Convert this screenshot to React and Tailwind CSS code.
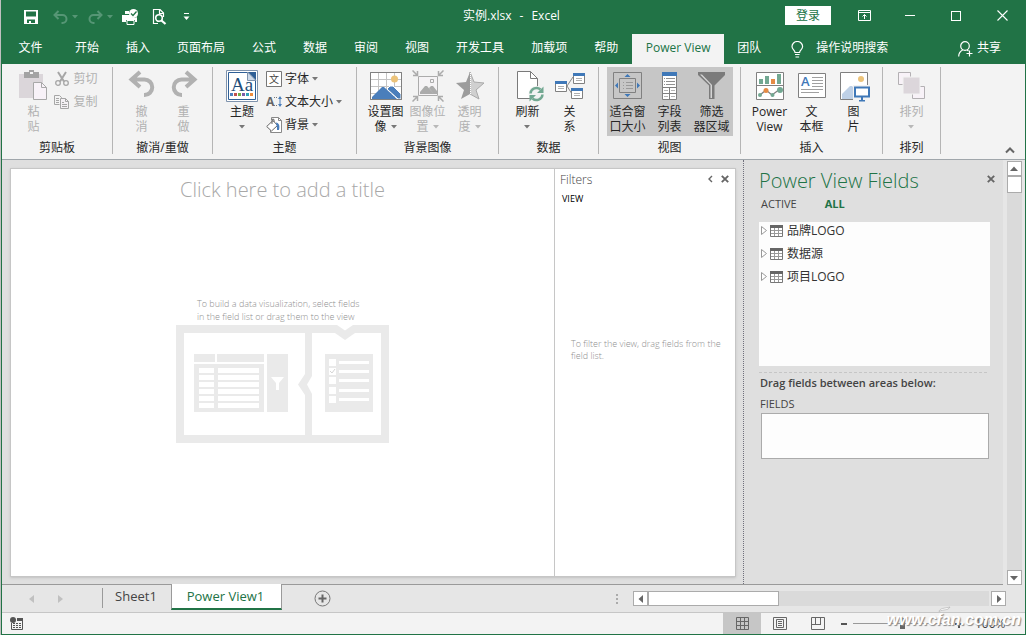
import { useState } from 'react';

const tabs = ['开始', '插入', '页面布局', '公式', '数据', '审阅', '视图', '开发工具', '加载项', '帮助', 'Power View', '团队'];
const tables = ['品牌LOGO', '数据源', '项目LOGO'];

const Caret = () => (
  <svg width="6" height="4" viewBox="0 0 6 4" className="inline-block shrink-0">
    <path d="M0 0h6L3 3.5z" fill="currentColor" />
  </svg>
);

const CloseIcon = () => (
  <svg width="8" height="8" viewBox="0 0 8 8">
    <path d="M0.8 0.8l6.4 6.4M7.2 0.8L0.8 7.2" stroke="currentColor" strokeWidth="1.9" />
  </svg>
);

/* quick access toolbar */

const SaveIcon = () => (
  <svg width="14" height="14" viewBox="0 0 14 14">
    <path fillRule="evenodd" fill="#fff" d="M0 0h14v14H0zM2 1.500v5h10v-5zM3 9.500V13h2v-2h2v2h4V9.500z" />
  </svg>
);

const SmallUndo = ({ flip }) => (
  <svg width="15" height="14" viewBox="0 0 15 14" className={flip ? '-scale-x-100' : ''}>
    <path d="M5.500 1L1.500 5l4 4M1.500 5h8a4 4 0 0 1 0 8H8.500" fill="none" stroke="#569675" strokeWidth="2" />
  </svg>
);

const QuickPrintIcon = () => (
  <svg width="17" height="16" viewBox="0 0 17 16">
    <path d="M0 6h8a4.500 4.500 0 0 0 7 2v5h-2v-2H4v2H0zM3 2h4v3H3z" fill="#fff" />
    <path d="M5 11.500h7v4H5z" fill="#217346" stroke="#fff" />
    <circle cx="11.500" cy="4.500" r="4.500" fill="#fff" />
    <path d="M9 4.500l2 2 3.500-4" fill="none" stroke="#217346" strokeWidth="1.300" />
  </svg>
);

const PreviewIcon = () => (
  <svg width="15" height="16" viewBox="0 0 15 16">
    <path d="M11.500 8V4L8 0.500H1.500v14H6M7.500 0.500v4h4" fill="none" stroke="#fff" strokeWidth="1.200" />
    <circle cx="7" cy="9" r="3.300" fill="#217346" stroke="#fff" strokeWidth="1.600" />
    <path d="M9.500 11.500l4 3.500" stroke="#fff" strokeWidth="2.200" />
  </svg>
);

/* ribbon icons */

const PasteIcon = () => (
  <svg width="32" height="32" viewBox="0 0 32 32">
    <path d="M2 4h24v24H2z" fill="#dbd6da" />
    <path d="M7 2h5V0h5v2h5v6H7z" fill="#a3a3a3" />
    <path d="M13 2h3v2h-3z" fill="#f3f3f3" />
    <path d="M16.500 12.500h8l5 5v12h-13z" fill="#f8f2f8" stroke="#a8a8a8" />
    <path d="M24.500 12.500v5h5" fill="none" stroke="#a8a8a8" />
  </svg>
);

const CutIcon = () => (
  <svg width="16" height="16" viewBox="0 0 16 16">
    <path d="M4 1l6 9.500M12 1L6 10.500" stroke="#a6a6a6" strokeWidth="2" />
    <circle cx="4" cy="12" r="2.300" fill="none" stroke="#a6a6a6" strokeWidth="1.300" />
    <circle cx="12" cy="12" r="2.300" fill="none" stroke="#a6a6a6" strokeWidth="1.300" />
  </svg>
);

const CopyIcon = () => (
  <svg width="16" height="16" viewBox="0 0 16 16">
    <path d="M5.500 10.500h-5v-9h5l2 2v2" fill="none" stroke="#a6a6a6" />
    <path d="M2 4.500h3M2 6.500h3M2 8.500h3" stroke="#a6a6a6" />
    <path d="M6.500 4.500h5l3 3v7h-8z" fill="#f5f1f5" stroke="#a6a6a6" />
    <path d="M11.500 4.500v3h3M8 8.500h2M8 10.500h5M8 12.500h5" fill="none" stroke="#a6a6a6" />
  </svg>
);

const BigUndo = ({ flip }) => (
  <svg width="32" height="32" viewBox="0 0 32 32" className={flip ? '-scale-x-100' : ''}>
    <path d="M14 2L5.500 9.500l8.500 7.500M5.500 9.500H18.500a7.500 7.500 0 0 1 0 15.500H18" fill="none" stroke="#b1b1b1" strokeWidth="4" />
  </svg>
);

const ThemeIcon = () => (
  <svg width="32" height="32" viewBox="0 0 32 32">
    <path d="M0.500 0.500h31v31H0.500z" fill="#fff" stroke="#7f93ad" />
    <path d="M2.500 2.500h27v27h-27z" fill="#fff" stroke="#2f5f96" />
    <path d="M21.500 2H30v8.500z" fill="#2f5f96" />
    <path d="M21.500 2v8.500H30z" fill="#cdd9e8" stroke="#7f93ad" />
    <text x="5" y="21" fontFamily="Liberation Serif, serif" fontSize="19" fill="#1f4e79">Aa</text>
    <path d="M4 23h3v3H4z" fill="#4f81bd" />
    <path d="M8 23h3v3H8z" fill="#c0504d" />
    <path d="M12 23h3v3h-3z" fill="#70ad47" />
    <path d="M16 23h3v3h-3z" fill="#7d5ba6" />
    <path d="M20 23h3v3h-3z" fill="#31a2b8" />
    <path d="M24 23h3v3h-3z" fill="#ee8c3c" />
  </svg>
);

const FontsIcon = () => (
  <svg width="16" height="16" viewBox="0 0 16 16">
    <path d="M0.500 0.500h15v15H0.500z" fill="#fff" stroke="#777" />
    <text x="3" y="12" fontFamily="Noto Sans CJK SC, sans-serif" fontSize="10" fill="#444">文</text>
  </svg>
);

const TextSizeIcon = () => (
  <svg width="16" height="16" viewBox="0 0 16 16">
    <text x="0" y="12" fontFamily="Open Sans, sans-serif" fontSize="12" fontWeight="700" fill="#666">A</text>
    <path d="M8 3.500h4M8 11.500h4" stroke="#777" strokeDasharray="1 1" />
    <path d="M14 3v9" stroke="#4a7ebb" />
    <path d="M12 5l2-3 2 3zM12 10l2 3 2-3z" fill="#4a7ebb" />
  </svg>
);

const BackgroundIcon = () => (
  <svg width="16" height="16" viewBox="0 0 16 16">
    <path d="M5.500 3V0.500h7l3 3v12h-11V13" fill="#fff" stroke="#888" />
    <path d="M12.500 0.500v3h3" fill="none" stroke="#888" />
    <path d="M0.700 9.500L7 3.500l4.500 5-6 5.500z" fill="#fff" stroke="#666" />
    <path d="M6 7V2.500a1.500 1.500 0 0 1 2 0V5" fill="none" stroke="#666" />
    <path d="M10 5.500c3 .5 4 3 3 7.500h-2c0-2 0-4-.5-5z" fill="#4a7ebb" />
  </svg>
);

const SetImageIcon = () => (
  <svg width="32" height="32" viewBox="0 0 32 32">
    <path d="M0.500 2.500h31v27H0.500z" fill="#fff" stroke="#808080" />
    <path d="M8.500 3v26M16.500 3v26M24.500 3v26M1 9.500h30M1 16.500h30M1 23.500h30" stroke="#c4c4c4" />
    <circle cx="24.500" cy="9" r="3.500" fill="#ecc37a" />
    <path d="M2 29v-2l10-10h2l13 12z" fill="#4a7ebb" />
    <path d="M17 19l3-3h3l8 8v5h-3z" fill="#4a7ebb" stroke="#fff" />
    <path d="M0.500 2.500h31v27H0.500z" fill="none" stroke="#808080" />
  </svg>
);

const ImagePositionIcon = () => (
  <svg width="32" height="32" viewBox="0 0 32 32">
    <path d="M6.500 6.500h19v19h-19z" fill="#f5f3f5" stroke="#ababab" />
    <path d="M8 24v-2l5-6h2l7 8zM17 18l2-2h2l4 5v3h-3z" fill="#ababab" />
    <path d="M18.500 9.500h3v3h-3z" fill="none" stroke="#ababab" />
    <g stroke="#ababab" strokeWidth="1.500" fill="none">
      <path d="M0.500 0.500l4.500 4.500M1 5.500h4.500V1M31.500 0.500l-4.500 4.500M31 5.500h-4.500V1M0.500 31.500l4.500-4.500M1 26.500h4.500V31M31.500 31.500l-4.500-4.500M31 26.500h-4.500V31" />
    </g>
  </svg>
);

const TransparencyIcon = () => (
  <svg width="32" height="32" viewBox="0 0 32 32">
    <path d="M16 2l4 10 10 1-8 7 3 9-9-5z" fill="#d0d0d0" stroke="#aaa" />
    <path d="M16 2l-4 10-10 1 8 7-3 9 9-5z" fill="#9c9c9c" />
    <path d="M16.500 3v21" stroke="#fff" strokeDasharray="1 1" />
  </svg>
);

const RefreshIcon = () => (
  <svg width="32" height="32" viewBox="0 0 32 32">
    <path d="M5.500 1.500h13l7 7v20h-20z" fill="#fff" stroke="#7a7a7a" />
    <path d="M18.500 1.500v7h7" fill="none" stroke="#7a7a7a" />
    <circle cx="24.500" cy="24" r="8" fill="#f3f3f3" />
    <path d="M18.500 23.500a6 6 0 0 1 10-4M30.500 24.500a6 6 0 0 1-10 4" fill="none" stroke="#72a892" strokeWidth="2.500" />
    <path d="M31.500 16.500v6.500H25zM17.500 31.500V25H24z" fill="#72a892" />
  </svg>
);

const RelationIcon = () => (
  <svg width="32" height="32" viewBox="0 0 32 32">
    <path d="M13 16l6-9M13 16l5 8" stroke="#888" fill="none" />
    <g fill="#fff" stroke="#808080">
      <path d="M1.500 11.500h11v10h-11zM19.500 3.500h11v10h-11zM17.500 18.500h11v10h-11z" />
    </g>
    <path d="M1 11h12v3H1zM19 3h12v3H19zM17 18h12v3H17z" fill="#3f78b8" />
    <path d="M4 16.500h6M4 18.500h6M22 8.500h6M22 10.500h6M20 23.500h6M20 25.500h6" stroke="#b0b0b0" />
  </svg>
);

const FitWindowIcon = () => (
  <svg width="32" height="32" viewBox="0 0 32 32">
    <path d="M1.500 2.500h28v26h-28z" fill="none" stroke="#808080" />
    <path d="M7.500 8.500h16v14h-16z" fill="none" stroke="#808080" />
    <path d="M11 12.500h1M14 12.500h7M11 15.500h1M14 15.500h7M11 18.500h1M14 18.500h7" stroke="#999" />
    <path d="M12.500 7l3-3 3 3zM12.500 24l3 3 3-3zM6 12.500v6l-3-3zM25 12.500v6l3-3z" fill="#3f78b8" />
  </svg>
);

const FieldListIcon = () => (
  <svg width="32" height="32" viewBox="0 0 32 32">
    <path d="M8.500 2.500h14v27h-14z" fill="#fff" stroke="#808080" />
    <path d="M8 2h15v4H8z" fill="#3f78b8" />
    <path d="M10 8.500h1M12 8.500h9M10 11.500h1M12 11.500h9M10 14.500h1M12 14.500h9" stroke="#909090" />
    <path d="M8 17.500h15M8 23.500h15M15.500 17v12" stroke="#808080" />
    <path d="M10 20.500h4M17 20.500h4M10 26.500h4M17 26.500h4" stroke="#b5b5b5" />
  </svg>
);

const FilterIcon = () => (
  <svg width="32" height="32" viewBox="0 0 32 32">
    <path d="M2 2h27v3L18.500 15.500V29H13V15.500L2 5z" fill="#7b7b7b" />
    <path d="M4 4.500L14.500 15v13H16V15L6 4.500z" fill="#d5d5d5" />
  </svg>
);

const PowerViewIcon = () => (
  <svg width="32" height="32" viewBox="0 0 32 32">
    <path d="M2.500 2.500h27v27h-27z" fill="#fff" stroke="#808080" />
    <path d="M3 15.500h26" stroke="#808080" />
    <path d="M5 9h4v5H5zM11 6h4v8h-4zM23 4h4v10h-4z" fill="#72a892" />
    <path d="M17 9h4v5h-4z" fill="#e48b45" />
    <path d="M6 25l6-5 6 5 8-6" fill="none" stroke="#808080" strokeWidth="1.300" />
    <circle cx="6" cy="25" r="2" fill="#72a892" />
    <circle cx="12" cy="20.500" r="2.500" fill="#e48b45" />
    <circle cx="18.500" cy="25" r="2" fill="#72a892" />
    <circle cx="26" cy="20" r="3" fill="#72a892" />
  </svg>
);

const TextBoxIcon = () => (
  <svg width="32" height="32" viewBox="0 0 32 32">
    <path d="M2.500 3.500h27v24h-27z" fill="#fff" stroke="#808080" />
    <text x="5" y="16" fontFamily="Open Sans, sans-serif" fontSize="13" fontWeight="600" fill="#3f78b8">A</text>
    <path d="M16 7.500h11M16 10.500h11M16 13.500h11M16 16.500h11M5 19.500h22M5 22.500h18" stroke="#a0a0a0" />
  </svg>
);

const PictureIcon = () => (
  <svg width="32" height="32" viewBox="0 0 32 32">
    <path d="M2.500 2.500h27v27h-27z" fill="#fff" stroke="#808080" />
    <circle cx="23" cy="9" r="3" fill="#ecc37a" />
    <path d="M4 29V24l8-8h2l3 3v10z" fill="#bed0e6" />
    <path d="M15 15h17v17H15z" fill="#f3f3f3" />
    <path d="M17 17.500h14v9H17z" fill="#fff" stroke="#3f78b8" strokeWidth="2" />
    <path d="M23 27h2v3h2v1.500h-6V30h2z" fill="#3f78b8" />
  </svg>
);

const ArrangeIcon = () => (
  <svg width="32" height="32" viewBox="0 0 32 32">
    <path d="M2.500 2.500h12v12h-12zM16.500 16.500h12v12h-12z" fill="#f8f2f8" stroke="#b3b0b3" />
    <path d="M7 7h17v17H7z" fill="#dcd6db" stroke="#f3f3f3" />
  </svg>
);

const SheetGridIcon = () => (
  <svg width="13" height="12" viewBox="0 0 13 12">
    <path d="M0.500 0.500h12v11H0.500z" fill="#fff" stroke="#777" />
    <path d="M0 0h13v3H0z" fill="#666" />
    <path d="M4.500 3v8M8.500 3v8M1 5.500h11M1 8.500h11" stroke="#999" />
  </svg>
);

// Placeholder art: a table view and a field list, joined like puzzle pieces
const EmptyViewArt = () => (
  <svg width="213" height="118" viewBox="0 0 213 118">
    <path d="M0 0h161l8 5.500L177 0h36v118H0z" fill="#eaeaea" />
    <path d="M8 8h121v41l-7 10.500 7 10.500v40H8z" fill="#fff" />
    <path d="M136 8h23l10 7 10-7h26v102h-69V69l-5-9.500 5-8.500z" fill="#fff" />
    <path d="M18 29h21v8H18zM41 29h47v8H41zM18 39h70v48H18zM91 29h21v58H91zM149 29h48v58h-48z" fill="#eaeaea" />
    <g fill="#fff">
      {[43, 50, 57, 64, 71, 78].map((y) => (
        <path key={y} d={`M23 ${y}h15v5H23zM42 ${y}h41v5H42z`} />
      ))}
      <path d="M95 52h13l-5 6v7h-3v-7z" />
      {[34, 43, 52, 62, 71].map((y) => (
        <path key={y} d={`M153 ${y}h7v7h-7zM163 ${y + 2}h30v3h-30z`} />
      ))}
    </g>
    <path d="M154 46l2 2 3-4" fill="none" stroke="#d5d5d5" />
  </svg>
);

const BigButton = ({ icon, lines, caret, disabled, active }) => (
  <button
    disabled={disabled}
    className={`flex h-[69px] w-[42px] shrink-0 flex-col items-center pt-[3px] ${active ? 'bg-[#c6c6c6]' : ''} ${disabled ? 'text-[#b1b1b1]' : 'text-[#262626]'}`}
  >
    {icon}
    <span className="mt-0.5 flex flex-col items-center leading-[15px] whitespace-nowrap">
      <span>{lines[0]}</span>
      <span className="flex h-[15px] items-center gap-1">
        {lines[1]}
        {caret && <span className={disabled ? 'flex text-[#b8b8b8]' : 'flex text-[#777]'}><Caret /></span>}
      </span>
    </span>
  </button>
);

const SmallButton = ({ icon, label, caret, disabled }) => (
  <button disabled={disabled} className={`flex h-[23px] items-center gap-[3px] whitespace-nowrap ${disabled ? 'text-[#b1b1b1]' : 'text-[#262626]'}`}>
    {icon}
    {label}
    {caret && <span className="flex text-[#777]"><Caret /></span>}
  </button>
);

const Group = ({ label, width, children }) => (
  <div className={`flex shrink-0 flex-col border-r border-[#b5b5b5] ${width}`}>
    <div className="flex h-[69px] justify-center">{children}</div>
    <div className="mt-0.5 text-center leading-5 text-[#262626]">{label}</div>
  </div>
);

const ScrollButton = ({ label, d }) => (
  <button aria-label={label} className="flex h-[15px] w-[15px] shrink-0 items-center justify-center border border-[#ababab] bg-white">
    <svg width="8" height="8" viewBox="0 0 8 8">
      <path d={d} fill="#666" />
    </svg>
  </button>
);

const TitleBar = () => (
  <div className="grid h-[34px] grid-cols-[1fr_auto_1fr] text-white">
    <div className="flex items-center pl-[22px]">
      <button aria-label="保存"><SaveIcon /></button>
      <button aria-label="撤消" className="ml-[15px] flex items-center gap-1 text-[#569675]"><SmallUndo /><Caret /></button>
      <button aria-label="重做" className="ml-2.5 flex items-center gap-1 text-[#569675]"><SmallUndo flip /><Caret /></button>
      <button aria-label="快速打印" className="ml-[9px]"><QuickPrintIcon /></button>
      <button aria-label="打印预览" className="ml-[13px]"><PreviewIcon /></button>
      <button aria-label="自定义" className="ml-4">
        <svg width="7" height="8" viewBox="0 0 7 8">
          <path d="M1 0.500h5" stroke="#fff" />
          <path d="M0.500 3.500h6L3.500 7z" fill="#fff" />
        </svg>
      </button>
    </div>
    <h1 className="flex gap-2 pt-1.5 pr-1 leading-5">
      <span>实例.xlsx</span>
      <span>-</span>
      <span>Excel</span>
    </h1>
    <div className="flex justify-end">
      <button className="mt-1.5 mr-2.5 h-[19px] w-[46px] bg-white leading-[19px] text-[#217346]">登录</button>
      <div className="flex h-[31px]">
        <button aria-label="功能区显示选项" className="flex w-[46px] items-center justify-center">
          <svg width="13" height="11" viewBox="0 0 13 11" fill="none" stroke="#fff">
            <path d="M0.500 0.500h12v10H0.500zM0.500 2.500h12M6.500 9V4.500M4.500 6.500l2-2 2 2" />
          </svg>
        </button>
        <button aria-label="最小化" className="flex w-[46px] items-center justify-center"><span className="h-px w-2.5 bg-white" /></button>
        <button aria-label="最大化" className="flex w-[46px] items-center justify-center"><span className="h-2.5 w-2.5 border border-white" /></button>
        <button aria-label="关闭" className="flex w-[46px] items-center justify-center">
          <svg width="11" height="11" viewBox="0 0 11 11">
            <path d="M0.500 0.500l10 10M10.500 0.500l-10 10" stroke="#fff" strokeWidth="1.100" />
          </svg>
        </button>
      </div>
    </div>
  </div>
);

const TabBar = () => (
  <div className="flex h-[30px] items-stretch text-white">
    <button className="mr-[3px] w-[57px] pb-0.5">文件</button>
    {tabs.map((tab) => (
      <button
        key={tab}
        className={tab === 'Power View' ? 'w-[92px] bg-[#f3f3f3] pb-0.5 whitespace-nowrap text-[#217346]' : 'mr-px px-[13px] pb-0.5 whitespace-nowrap'}
      >
        {tab}
      </button>
    ))}
    <label className="ml-4 flex items-center gap-3">
      <svg width="13" height="17" viewBox="0 0 13 17" fill="none" stroke="#fff" strokeWidth="1.200">
        <path d="M4 11.500C4 9 1 8.500 1 5.500a5.300 5 0 0 1 10.600 0c0 3-3 3.500-3 6zM4 13.500h4.600M4.500 16h3.600" />
      </svg>
      <input aria-label="操作说明搜索" placeholder="操作说明搜索" className="w-20 bg-transparent pb-0.5 outline-none placeholder:text-white" />
    </label>
    <button className="mr-6 ml-auto flex items-center gap-1">
      <svg width="15" height="16" viewBox="0 0 15 16" fill="none" stroke="#fff" strokeWidth="1.200">
        <circle cx="7" cy="5" r="4.300" />
        <path d="M0.700 15.500c0-4 2-5.500 4-6.500M9 9l1.500 1M11.500 9.500v6M8.500 12.500h6" />
      </svg>
      <span className="pb-0.5">共享</span>
    </button>
  </div>
);

const Ribbon = () => (
  <div className="flex h-24 border-b border-[#a0a6ab] bg-[#f3f3f3] pt-[3px] pb-[5px]">
    <Group label="剪贴板" width="w-[111px]">
      <BigButton icon={<PasteIcon />} lines={['粘', '贴']} disabled />
      <div className="flex flex-col pr-1">
        <SmallButton icon={<CutIcon />} label="剪切" disabled />
        <SmallButton icon={<CopyIcon />} label="复制" disabled />
      </div>
    </Group>
    <Group label="撤消/重做" width="w-[100px]">
      <BigButton icon={<BigUndo />} lines={['撤', '消']} disabled />
      <BigButton icon={<BigUndo flip />} lines={['重', '做']} disabled />
    </Group>
    <Group label="主题" width="w-36">
      <BigButton icon={<ThemeIcon />} lines={['主题', '']} caret />
      <div className="flex flex-col pr-1.5 pl-[3px]">
        <SmallButton icon={<FontsIcon />} label="字体" caret />
        <SmallButton icon={<TextSizeIcon />} label="文本大小" caret />
        <SmallButton icon={<BackgroundIcon />} label="背景" caret />
      </div>
    </Group>
    <Group label="背景图像" width="w-[142px]">
      <BigButton icon={<SetImageIcon />} lines={['设置图', '像']} caret />
      <BigButton icon={<ImagePositionIcon />} lines={['图像位', '置']} caret disabled />
      <BigButton icon={<TransparencyIcon />} lines={['透明', '度']} caret disabled />
    </Group>
    <Group label="数据" width="w-[100px]">
      <BigButton icon={<RefreshIcon />} lines={['刷新', '']} caret />
      <BigButton icon={<RelationIcon />} lines={['关', '系']} />
    </Group>
    <Group label="视图" width="w-[142px]">
      <BigButton icon={<FitWindowIcon />} lines={['适合窗', '口大小']} active />
      <BigButton icon={<FieldListIcon />} lines={['字段', '列表']} active />
      <BigButton icon={<FilterIcon />} lines={['筛选', '器区域']} active />
    </Group>
    <Group label="插入" width="w-[142px]">
      <BigButton icon={<PowerViewIcon />} lines={['Power', 'View']} />
      <BigButton icon={<TextBoxIcon />} lines={['文', '本框']} />
      <BigButton icon={<PictureIcon />} lines={['图', '片']} />
    </Group>
    <Group label="排列" width="w-[58px]">
      <BigButton icon={<ArrangeIcon />} lines={['排列', '']} caret disabled />
    </Group>
    <button aria-label="折叠功能区" className="mr-2.5 ml-auto self-end">
      <svg width="10" height="7" viewBox="0 0 10 7">
        <path d="M1 5.500l4-4 4 4" fill="none" stroke="#666" strokeWidth="2" />
      </svg>
    </button>
  </div>
);

const Canvas = () => (
  <section className="flex-1 bg-white">
    <input
      aria-label="Title"
      placeholder="Click here to add a title"
      className="mt-0.5 h-9 w-full text-center text-xl font-light outline-none placeholder:text-[#a8a8a8]"
    />
    <div className="mx-auto mt-[90px] w-[213px]">
      <p className="mb-0.5 pl-[21px] text-[9px] leading-[13px] font-light whitespace-nowrap text-[#909090]">
        To build a data visualization, select fields
        <br />
        in the field list or drag them to the view
      </p>
      <EmptyViewArt />
    </div>
  </section>
);

const Filters = () => (
  <aside className="w-[181px] shrink-0 border-l border-[#c6c6c6] bg-white">
    <div className="flex h-[22px] items-center pl-[5px]">
      <h2 className="font-light text-[#444]">Filters</h2>
      <button aria-label="Collapse" className="ml-auto pb-0.5">
        <svg width="5" height="8" viewBox="0 0 5 8">
          <path d="M4 1L1 4l3 3" fill="none" stroke="#666" strokeWidth="1.400" />
        </svg>
      </button>
      <button aria-label="Close filters" className="mr-1.5 ml-2 pb-0.5 text-[#666]"><CloseIcon /></button>
    </div>
    <button className="mt-0.5 block pl-[7px] text-[9px] leading-3 text-black">VIEW</button>
    <p className="mt-[133px] pl-4 text-[9px] leading-3 font-light whitespace-nowrap text-[#909090]">
      To filter the view, drag fields from the
      <br />
      field list.
    </p>
  </aside>
);

const FieldsPane = () => (
  <aside className="w-[260px] shrink-0 border-l border-dotted border-[#70707c] pr-3 pl-[15px] text-[#444]">
    <div className="flex h-[42px] items-center justify-between">
      <h2 className="text-xl font-light whitespace-nowrap text-[#217346]">Power View Fields</h2>
      <button aria-label="Close fields" className="-mr-1 pb-1 text-[#666]"><CloseIcon /></button>
    </div>
    <div className="flex h-5 gap-7 pl-0.5 text-[11px]">
      <button className="h-1">
        <span className="block leading-1">ACTIVE</span>
      </button>
      <button className="h-1 font-bold text-[#217346]">
        <span className="block leading-1">ALL</span>
      </button>
    </div>
    <ul className="h-36 w-[231px] bg-[#fdfdfd] text-[#333]">
      {tables.map((name) => (
        <li key={name} className="flex h-[23px] items-start">
          <button className="flex h-[17px] items-center pl-0.5 whitespace-nowrap">
            <svg width="6" height="9" viewBox="0 0 6 9" className="mr-[3px]">
              <path d="M0.500 0.500v8l5-4z" fill="#fff" stroke="#999" />
            </svg>
            <SheetGridIcon />
            <span className="pl-1">{name}</span>
          </button>
        </li>
      ))}
    </ul>
    <div className="mt-1.5 mr-1 border-t border-dashed border-[#c6c6c6]" />
    <h3 className="mt-0.5 pl-px text-[11px] leading-4 font-semibold whitespace-nowrap">Drag fields between areas below:</h3>
    <h4 className="mt-1 pl-px text-[11px] leading-[18px]">FIELDS</h4>
    <div className="ml-0.5 h-[46px] w-[228px] border border-[#ababab] bg-[#fdfdfd]" />
  </aside>
);

const SheetBar = () => (
  <div className="flex h-[27px] bg-[#e6e6e6]">
    <div className="flex w-[100px] items-center gap-6 pl-[27px]">
      <button aria-label="上一个工作表">
        <svg width="5" height="8" viewBox="0 0 5 8"><path d="M5 0v8L0 4z" fill="#c0c0c0" /></svg>
      </button>
      <button aria-label="下一个工作表">
        <svg width="5" height="8" viewBox="0 0 5 8"><path d="M0 0v8l5-4z" fill="#c0c0c0" /></svg>
      </button>
    </div>
    <button className="mt-[3px] h-5 w-[69px] border-l border-[#9a9a9a] pr-0.5 pb-1 text-[13px] leading-4 text-[#444]">Sheet1</button>
    <button className="-mt-px h-[26px] w-[111px] border-x border-b-2 border-x-[#9a9a9a] border-b-[#217346] bg-white pt-0.5 pr-0.5 text-[13px] text-[#217346]">
      Power View1
    </button>
    <button aria-label="新工作表" className="ml-8">
      <svg width="17" height="17" viewBox="0 0 17 17">
        <circle cx="8.500" cy="8.500" r="7.500" fill="none" stroke="#777" />
        <path d="M4.500 8.500h8M8.500 4.500v8" stroke="#666" strokeWidth="2" />
      </svg>
    </button>
    <svg width="2" height="10" viewBox="0 0 2 10" className="mr-[15px] ml-auto self-center">
      <path d="M0 0h2v2H0zM0 4h2v2H0zM0 8h2v2H0z" fill="#ababab" />
    </svg>
    <div className="mr-[19px] flex w-[373px] items-center">
      <ScrollButton label="向左滚动" d="M6 0v8L1.500 4z" />
      <div className="mr-0.5 h-[15px] flex-1 bg-[#dadada]">
        <div className="h-full w-[131px] border border-[#ababab] bg-white" />
      </div>
      <ScrollButton label="向右滚动" d="M2 0v8l4.500-4z" />
    </div>
  </div>
);

const StatusBar = () => {
  const [zoom, setZoom] = useState(50);
  return (
    <div className="relative flex h-[22px] items-stretch border-t border-[#c6c6c6] bg-[#f3f3f3] text-[#444]">
      <button aria-label="录制宏" className="pl-2">
        <svg width="14" height="14" viewBox="0 0 14 14">
          <path d="M7 1h6v3H7z" fill="#555" />
          <path d="M1.500 6v6.500h11V3" fill="none" stroke="#555" />
          <path d="M3 6.500h2M6 6.500h2M9 6.500h2M3 8.500h2M6 8.500h2M9 8.500h2M3 10.500h2M6 10.500h2M9 10.500h2" stroke="#555" />
          <circle cx="3" cy="3" r="3" fill="#555" />
        </svg>
      </button>
      <div className="ml-auto flex">
        <button aria-label="普通" className="flex w-[38px] items-center justify-center bg-[#c6c6c6]">
          <svg width="13" height="13" viewBox="0 0 13 13" fill="none" stroke="#666">
            <path d="M0.500 0.500h12v12H0.500zM4.500 0v13M8.500 0v13M0 4.500h13M0 8.500h13" />
          </svg>
        </button>
        <button aria-label="页面布局" className="flex w-[38px] items-center justify-center">
          <svg width="14" height="13" viewBox="0 0 14 13" fill="none" stroke="#666">
            <path d="M0.500 0.500h13v12h-13zM3.500 2.500h7v8h-7zM5 4.500h4M5 6.500h4M5 8.500h4" />
          </svg>
        </button>
        <button aria-label="分页预览" className="flex w-[38px] items-center justify-center">
          <svg width="14" height="13" viewBox="0 0 14 13" fill="none" stroke="#666">
            <path d="M0.500 0.500h13v12h-13zM4.500 1v7M9.500 1v7M1 7.500h9" />
          </svg>
        </button>
      </div>
      <button aria-label="缩小" className="ml-1 flex w-3 items-center"><span className="h-0.5 w-1.5 bg-[#555]" /></button>
      <input
        type="range"
        aria-label="显示比例"
        value={zoom}
        onChange={(e) => setZoom(e.target.value)}
        className="w-[98px] appearance-none bg-transparent [&::-webkit-slider-runnable-track]:h-px [&::-webkit-slider-runnable-track]:bg-[#999] [&::-webkit-slider-thumb]:-mt-[5px] [&::-webkit-slider-thumb]:h-[11px] [&::-webkit-slider-thumb]:w-[5px] [&::-webkit-slider-thumb]:appearance-none [&::-webkit-slider-thumb]:bg-[#666]"
      />
      <button aria-label="放大" className="ml-1 flex items-center">
        <svg width="8" height="8" viewBox="0 0 8 8"><path d="M0 4h8M4 0v8" stroke="#555" strokeWidth="2" /></svg>
      </button>
      <span className="w-[62px] pl-3 leading-[21px]">100%</span>
      <div className="pointer-events-none absolute right-1 bottom-1 font-['Liberation_Sans',sans-serif] text-base leading-5 font-bold text-white italic [text-shadow:1px_1px_1px_#888]">
        <svg width="14" height="6" viewBox="0 0 14 6" className="absolute -top-1 left-[52px]">
          <path d="M1 5.500C2 2 6 2.500 12 1 10 5 5 3 1 5.500z" fill="#fff" stroke="#aaa" strokeWidth="0.600" />
        </svg>
        www.cfan.com.cn
      </div>
    </div>
  );
};

export default function App() {
  return (
    <div className="flex min-h-screen bg-[#c0c0c0] pl-px font-['Open_Sans','Noto_Sans_CJK_SC',sans-serif] text-xs">
      <div className="flex min-w-0 flex-1 flex-col border-x border-b border-[#217346] bg-[#dfdfdf]">
        <header className="bg-[#217346]">
          <TitleBar />
          <TabBar />
          <Ribbon />
        </header>
        <main className="flex flex-1">
          <div className="flex min-w-0 flex-1 border-b border-[#9a9a9a]">
            <div className="mt-2 mr-[7px] mb-[7px] ml-2 flex min-w-0 flex-1 border border-[#c6c6c6] shadow-sm">
              <Canvas />
              <Filters />
            </div>
            <FieldsPane />
          </div>
          <div className="flex w-[22px] shrink-0 flex-col items-center bg-[#e6e6e6] pt-px">
            <ScrollButton label="向上滚动" d="M0 6h8L4 1.500z" />
            <div className="w-[15px] flex-1 bg-[#dadada]">
              <div className="h-[17px] border border-[#ababab] bg-white" />
            </div>
            <ScrollButton label="向下滚动" d="M0 2h8L4 6.500z" />
          </div>
        </main>
        <SheetBar />
        <StatusBar />
      </div>
    </div>
  );
}
